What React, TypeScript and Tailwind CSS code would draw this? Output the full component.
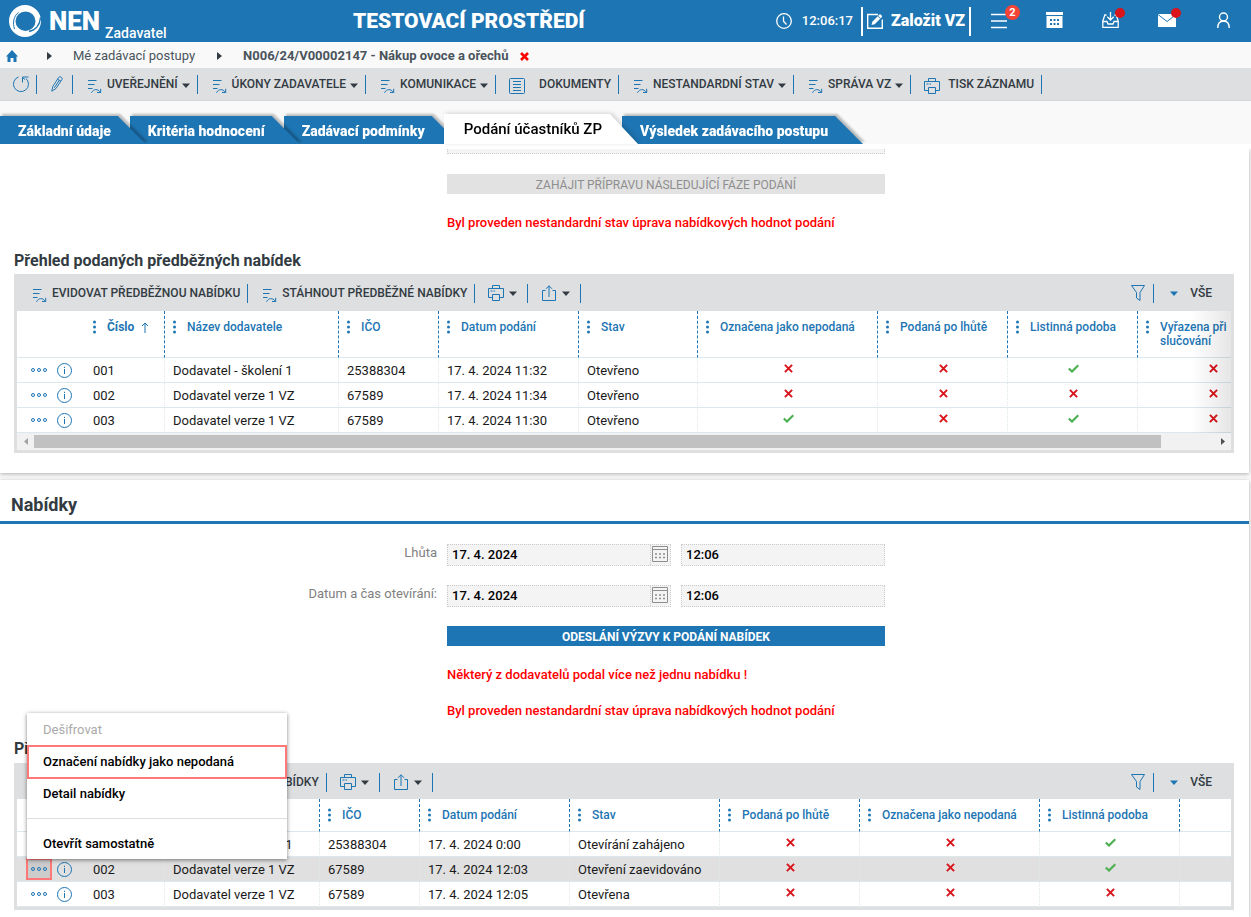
import { ReactNode } from 'react';
import clsx from 'clsx';

type Cell = string | boolean;

interface Column {
  label: string;
  width: string;
  sorted?: boolean;
  mark?: boolean;
}

interface Row {
  cells: Cell[];
  active?: boolean;
}

const tabs = [
  { label: 'Základní údaje', layer: 'z-40' },
  { label: 'Kritéria hodnocení', layer: 'z-30' },
  { label: 'Zadávací podmínky', layer: 'z-20' },
  { label: 'Podání účastníků ZP', layer: 'z-50', active: true },
  { label: 'Výsledek zadávacího postupu', layer: 'z-10' },
];

const preliminaryColumns: Column[] = [
  { label: 'Číslo', width: 'w-[80px]', sorted: true },
  { label: 'Název dodavatele', width: 'w-[174px]' },
  { label: 'IČO', width: 'w-[100px]' },
  { label: 'Datum podání', width: 'w-[140px]' },
  { label: 'Stav', width: 'w-[119px]' },
  { label: 'Označena jako nepodaná', width: 'w-[180px]', mark: true },
  { label: 'Podaná po lhůtě', width: 'w-[130px]', mark: true },
  { label: 'Listinná podoba', width: 'w-[130px]', mark: true },
  { label: 'Vyřazena při slučování', width: 'w-[150px]', mark: true },
];

const preliminaryRows: Row[] = [
  { cells: ['001', 'Dodavatel - školení 1', '25388304', '17. 4. 2024 11:32', 'Otevřeno', false, false, true, false] },
  { cells: ['002', 'Dodavatel verze 1 VZ', '67589', '17. 4. 2024 11:34', 'Otevřeno', false, false, false, false] },
  { cells: ['003', 'Dodavatel verze 1 VZ', '67589', '17. 4. 2024 11:30', 'Otevřeno', true, false, true, false] },
];

const offerColumns: Column[] = [
  { label: 'Číslo', width: 'w-[80px]', sorted: true },
  { label: 'Název dodavatele', width: 'w-[155px]' },
  { label: 'IČO', width: 'w-[100px]' },
  { label: 'Datum podání', width: 'w-[150px]' },
  { label: 'Stav', width: 'w-[150px]' },
  { label: 'Podaná po lhůtě', width: 'w-[140px]', mark: true },
  { label: 'Označena jako nepodaná', width: 'w-[180px]', mark: true },
  { label: 'Listinná podoba', width: 'w-[140px]', mark: true },
];

const offerRows: Row[] = [
  { cells: ['001', 'Dodavatel - školení 1', '25388304', '17. 4. 2024 0:00', 'Otevírání zahájeno', false, false, true] },
  { cells: ['002', 'Dodavatel verze 1 VZ', '67589', '17. 4. 2024 12:03', 'Otevření zaevidováno', false, false, true], active: true },
  { cells: ['003', 'Dodavatel verze 1 VZ', '67589', '17. 4. 2024 12:05', 'Otevřena', false, false, false] },
];

const Logo = () => (
  <svg className="h-8 w-8" viewBox="0 0 32 32" fill="none">
    <path
      fill="#fff"
      fillRule="evenodd"
      d="M16 0a16 16 0 1 0 0 32a16 16 0 0 0 0-32zM16.500 6.500a10 9.700 0 1 1 0 19.400a10 9.700 0 0 1 0-19.400z"
    />
    <path d="M5.500 24C3.500 18 4.500 11 9.500 7.500" stroke="#1d75b3" strokeWidth="1" />
    <path d="M31.500 12.500C31 20 26.500 25.500 20 26.500" stroke="#1d75b3" strokeWidth="1.300" />
  </svg>
);

const ClockIcon = () => (
  <svg className="h-4 w-4" viewBox="0 0 16 16" fill="none" stroke="#fff" strokeWidth="1.300">
    <circle cx="8" cy="8" r="7.300" />
    <path d="M7.500 3.500V8.200L10.500 11.500" />
  </svg>
);

const EditIcon = () => (
  <svg className="h-4 w-4" viewBox="0 0 16 16" fill="none">
    <path d="M11 1.500H.7V15.300H15.300V6.500" stroke="#fff" strokeWidth="1.400" />
    <path d="M4.500 12L5.300 8.800L12.500 1.500C13.200.800 15.700 3.200 14.900 4L7.700 11.200z" fill="#fff" />
    <path d="M11 3.200L13.400 5.600" stroke="#1d75b3" strokeWidth="1" />
  </svg>
);

const BurgerIcon = () => (
  <svg className="h-4 w-4" viewBox="0 0 16 16" stroke="#fff" strokeWidth="1.700">
    <path d="M0 1.500H16M0 8H16M0 14.500H16" />
  </svg>
);

const CalendarSolidIcon = () => (
  <svg className="h-4 w-[17px]" viewBox="0 0 17 16">
    <path fill="#fff" d="M0 0H17V3H0zM.500 4H16.500V16H.500z" />
    <path fill="#1d75b3" d="M4 7h2v2H4zM7.500 7h2v2h-2zM11 7h2v2h-2zM4 11h2v2H4zM7.500 11h2v2h-2zM11 11h2v2h-2z" />
  </svg>
);

const InboxIcon = () => (
  <svg className="h-4 w-[17px]" viewBox="0 0 17 16" fill="none" stroke="#fff" strokeWidth="1.300">
    <path d="M8.500 0V7.500M5.300 4.800L8.500 8L11.700 4.800" />
    <path d="M4.500 3H2.800L.8 9V15.300H16.200V9L14.200 3H12.500" />
    <path d="M.8 9.500H5L6 12H11L12 9.500H16.200" />
  </svg>
);

const MailIcon = () => (
  <svg className="h-[14px] w-[18px]" viewBox="0 0 18 14">
    <path fill="#fff" d="M0 1H18V14H0z" />
    <path d="M0 1.500L9 8.500L18 1.500" fill="none" stroke="#1d75b3" strokeWidth="1" />
  </svg>
);

const UserIcon = () => (
  <svg className="h-4 w-[13px]" viewBox="0 0 13 16" fill="none" stroke="#fff" strokeWidth="1.400">
    <circle cx="6.500" cy="5" r="4" />
    <path d="M.8 16C.8 11.500 3 9 6.500 9S12.200 11.500 12.200 16" />
  </svg>
);

const RefreshIcon = () => (
  <svg className="h-[18px] w-[18px]" viewBox="0 0 18 18" fill="none" stroke="#1d75b3" strokeWidth="1">
    <path d="M6.500 2A7.500 7.500 0 1 0 14 3.500" />
    <path d="M10.500 7.500V2H16.500M10.500 2.500L13 4.500" />
  </svg>
);

const PencilIcon = () => (
  <svg className="h-4 w-3" viewBox="0 0 12 16" fill="none" stroke="#1d75b3" strokeWidth="1">
    <path d="M.8 15.200L1.800 10.500L7.600 1.500C8.700-.200 12 1.700 10.900 3.500L5 12.500z" />
    <path d="M6.500 3.200L10 5.300M8.300 4.300L3.300 11.800" />
  </svg>
);

const ActionIcon = () => (
  <svg className="h-4 w-[14px]" viewBox="0 0 14 16" fill="none" stroke="#1d75b3" strokeWidth="1">
    <path d="M0 2.500H8.500M0 6.500H6.500M0 10.500H4.500" strokeWidth="1.200" />
    <path d="M3.500 14.800C5.500 10.800 9.500 10.500 12.500 14.300M12.700 10.800V14.500H9" />
  </svg>
);

const DocumentIcon = () => (
  <svg className="h-4 w-4" viewBox="0 0 16 16" fill="none" stroke="#1d75b3" strokeWidth="1">
    <rect x=".5" y=".5" width="15" height="15" rx="1" />
    <path d="M4 3.500H12M4 6.500H12M4 9.500H12M4 12.500H12" />
  </svg>
);

const PrinterIcon = () => (
  <svg className="h-4 w-4" viewBox="0 0 16 16" fill="none" stroke="#1d75b3" strokeWidth="1">
    <path d="M4.500 3.500V.500H11.500V3.500M4.500 12.500H.500V3.500H15.500V12.500H11.500" />
    <path d="M4.500 9.500H11.500V15.500H4.500zM2.500 6H4.500M5.500 6H7" />
  </svg>
);

const ShareIcon = () => (
  <svg className="h-4 w-[14px]" viewBox="0 0 14 16" fill="none" stroke="#1d75b3" strokeWidth="1">
    <path d="M3.500 5.500H.500V15.500H13.500V5.500H10.500M7 12V.800M4 3.800L7 .800L10 3.800" />
  </svg>
);

const FilterIcon = () => (
  <svg className="h-4 w-[14px]" viewBox="0 0 14 16" fill="none" stroke="#1d75b3" strokeWidth="1">
    <path d="M.500.500H13.500L9 7.500V15.500L5.500 13V7.500z" />
  </svg>
);

const CalendarIcon = () => (
  <svg className="h-4 w-4" viewBox="0 0 16 16" fill="none" stroke="#8e8e8e" strokeWidth="1">
    <path d="M.500.500H15.500V15.500H.500zM.500 3.500H15.500" />
    <path d="M3 8H13M3 11.500H13" strokeWidth="1.500" strokeDasharray="2 2" />
  </svg>
);

const Caret = ({ className }: { className?: string }) => (
  <svg className={clsx('h-[5px] w-2', className)} viewBox="0 0 8 5" fill="currentColor">
    <path d="M0 .500H8L4 5z" />
  </svg>
);

const CrumbArrow = () => (
  <svg className="h-2 w-[5px]" viewBox="0 0 5 8" fill="#333b42">
    <path d="M0 0L5 4L0 8z" />
  </svg>
);

const MoreIcon = () => (
  <svg className="h-1 w-4" viewBox="0 0 16 4" fill="none" stroke="#1d75b3" strokeWidth="1">
    <circle cx="2" cy="2" r="1.500" />
    <circle cx="8" cy="2" r="1.500" />
    <circle cx="14" cy="2" r="1.500" />
  </svg>
);

const InfoIcon = () => (
  <svg className="h-[15px] w-[15px]" viewBox="0 0 15 15" fill="none" stroke="#1d75b3" strokeWidth="1">
    <circle cx="7.500" cy="7.500" r="7" />
    <path d="M7.500 6V11M7.500 3.800V5" />
  </svg>
);

const Mark = ({ checked }: { checked: boolean }) =>
  checked ? (
    <svg className="mx-auto mb-1.5 h-[9px] w-[11px]" viewBox="0 0 11 9" role="img" aria-label="Ano">
      <path d="M.8 4.500L4 7.500L10.300 1.200" fill="none" stroke="#4caf50" strokeWidth="2.200" />
    </svg>
  ) : (
    <svg className="mx-auto mb-1.5 h-[9px] w-[9px]" viewBox="0 0 9 9" role="img" aria-label="Ne">
      <path d="M.9.9L8.100 8.100M8.100.9L.9 8.100" stroke="#d9151b" strokeWidth="2" />
    </svg>
  );

const Header = () => (
  <header className="flex h-[42px] items-center bg-[#1d75b3] text-white">
    <div className="flex w-[353px] items-center pl-[9px]">
      <Logo />
      <span className="ml-2 text-[26px] leading-8 font-black">NEN</span>
      <span className="mt-6 ml-[5px] text-sm leading-4 font-medium">Zadavatel</span>
    </div>
    <h1 className="text-[21px] leading-6 font-black">TESTOVACÍ PROSTŘEDÍ</h1>
    <div className="ml-auto flex items-center">
      <ClockIcon />
      <span className="mr-2 ml-2.5 text-[13px] leading-4 font-medium">12:06:17</span>
      <button type="button" className="flex h-[29px] items-center gap-2 border-x-2 border-white px-1 text-base font-black">
        <EditIcon />
        Založit VZ
      </button>
      <button type="button" aria-label="Úkoly" className="relative flex h-[42px] w-14 items-center justify-center">
        <BurgerIcon />
        <span className="absolute top-[5px] left-[34px] h-[15px] w-[15px] rounded-full bg-[#f44336] text-center text-[11px] leading-[15px] font-bold">
          2
        </span>
      </button>
      <button type="button" aria-label="Kalendář" className="flex h-[42px] w-14 items-center justify-center pr-0.5 pb-0.5">
        <CalendarSolidIcon />
      </button>
      <button type="button" aria-label="Doručené" className="relative flex h-[42px] w-14 items-center justify-center pr-0.5 pb-0.5">
        <InboxIcon />
        <span className="absolute top-2 left-8 h-2.5 w-2.5 rounded-full bg-[#d9151b]" />
      </button>
      <button type="button" aria-label="Zprávy" className="relative flex h-[42px] w-14 items-center justify-center pb-0.5">
        <MailIcon />
        <span className="absolute top-2 left-8 h-2.5 w-2.5 rounded-full bg-[#d9151b]" />
      </button>
      <button type="button" aria-label="Uživatel" className="flex h-[42px] w-14 items-center justify-center pb-0.5">
        <UserIcon />
      </button>
    </div>
  </header>
);

const Breadcrumbs = () => (
  <nav className="flex h-[26px] items-center pt-0.5 text-[13px] text-[#4a545c]">
    <a href="#domu" aria-label="Domů" className="pl-1.5">
      <svg className="h-3 w-3" viewBox="0 0 12 12" fill="#1d75b3">
        <path d="M6 0L12 6.500H10.500V12H7.500V8H4.500V12H1.500V6.500H0z" />
      </svg>
    </a>
    <span className="ml-[29px]">
      <CrumbArrow />
    </span>
    <a href="#postupy" className="ml-[21px]">
      Mé zadávací postupy
    </a>
    <span className="ml-[22px]">
      <CrumbArrow />
    </span>
    <span className="ml-[21px] font-bold">N006/24/V00002147 - Nákup ovoce a ořechů</span>
    <button type="button" aria-label="Zavřít" className="ml-3">
      <svg className="h-[9px] w-[9px]" viewBox="0 0 9 9" stroke="#f00" strokeWidth="2.600">
        <path d="M1 1L8 8M8 1L1 8" />
      </svg>
    </button>
  </nav>
);

interface ToolButtonProps {
  icon: ReactNode;
  label: string;
  gap?: string;
  padding?: string;
  caret?: boolean;
}

const ToolButton = ({ icon, label, gap = 'ml-[5px]', padding = 'pl-[15px]', caret }: ToolButtonProps) => (
  <button
    type="button"
    className={clsx(
      'flex h-[19px] items-center border-r border-[#1d75b3] pr-[7px] text-xs font-medium text-[#333b42]',
      padding
    )}
  >
    <span className="mt-1">{icon}</span>
    <span className={gap}>{label}</span>
    {caret && <Caret className="mt-0.5 ml-1" />}
  </button>
);

const Toolbar = () => (
  <div className="flex h-[33px] items-center border-b border-[#d3d5d7] bg-[#dddfe1]">
    <button
      type="button"
      aria-label="Obnovit"
      className="flex h-[19px] items-center border-r border-[#1d75b3] pr-1.5 pl-3"
    >
      <RefreshIcon />
    </button>
    <button type="button" aria-label="Upravit" className="flex h-[19px] items-center border-r border-[#1d75b3] pr-[9px] pl-3.5">
      <PencilIcon />
    </button>
    <ToolButton icon={<ActionIcon />} label="UVEŘEJNĚNÍ" caret />
    <ToolButton icon={<ActionIcon />} label="ÚKONY ZADAVATELE" caret />
    <ToolButton icon={<ActionIcon />} label="KOMUNIKACE" caret />
    <ToolButton icon={<DocumentIcon />} label="DOKUMENTY" gap="ml-3.5" padding="pl-[13px]" />
    <ToolButton icon={<ActionIcon />} label="NESTANDARDNÍ STAV" caret />
    <ToolButton icon={<ActionIcon />} label="SPRÁVA VZ" caret />
    <ToolButton icon={<PrinterIcon />} label="TISK ZÁZNAMU" gap="ml-2" padding="pl-[13px]" />
  </div>
);

const Tabs = () => (
  <ul className="flex pt-[13px]">
    {tabs.map(({ label, layer, active }) => (
      <li
        key={label}
        className={clsx(
          'relative -mr-4',
          layer,
          active
            ? 'drop-shadow-[2px_-1px_2px_rgba(0,0,0,0.15)]'
            : 'pt-0.5 drop-shadow-[2px_-2px_1px_rgba(0,0,0,0.25)]'
        )}
      >
        <button
          type="button"
          className={clsx(
            'block [clip-path:polygon(0_0,calc(100%-28px)_0,100%_100%,0_100%)]',
            active
              ? 'h-[30px] bg-white pr-[36px] pl-5 text-[15px] font-medium text-black'
              : 'h-7 bg-[#1d75b3] pt-0.5 pr-[35px] pl-[18px] text-sm font-black text-white'
          )}
        >
          {label}
        </button>
      </li>
    ))}
  </ul>
);

const RowMenu = () => (
  <div
    role="menu"
    className="absolute bottom-[21px] left-px z-10 w-[260px] bg-white text-[13px] font-medium text-black shadow-[0_1px_4px_rgba(0,0,0,0.5)]"
  >
    <button type="button" role="menuitem" disabled className="block h-8 w-full px-4 pt-0.5 text-left font-normal text-[#aaa]">
      Dešifrovat
    </button>
    <button type="button" role="menuitem" className="block h-[34px] w-full px-4 text-left ring-2 ring-[#ff7878] ring-inset">
      Označení nabídky jako nepodaná
    </button>
    <button type="button" role="menuitem" className="block h-7 w-full px-4 pt-0.5 text-left">
      Detail nabídky
    </button>
    <hr className="mt-[11px] mb-2 border-[#ddd]" />
    <button type="button" role="menuitem" className="block h-8 w-full px-4 pt-0.5 text-left">
      Otevřít samostatně
    </button>
  </div>
);

interface GridToolbarProps {
  actions: string[];
}

const GridToolbar = ({ actions }: GridToolbarProps) => (
  <div className="flex h-9 items-center bg-[#dddfe1] pt-0.5 pl-1">
    {actions.map((action) => (
      <ToolButton key={action} icon={<ActionIcon />} label={action} />
    ))}
    <button type="button" aria-label="Tisk" className="flex h-[19px] items-center border-r border-[#1d75b3] pr-2.5 pl-[13px] text-[#333b42]">
      <PrinterIcon />
      <Caret className="ml-[5px]" />
    </button>
    <button type="button" aria-label="Export" className="flex h-[19px] items-center border-r border-[#1d75b3] pr-2.5 pl-[13px] text-[#333b42]">
      <span className="px-px">
        <ShareIcon />
      </span>
      <Caret className="ml-[5px]" />
    </button>
    <button type="button" aria-label="Filtr" className="ml-auto flex h-[19px] items-center border-r border-[#1d75b3] pr-2">
      <FilterIcon />
    </button>
    <button type="button" className="flex items-center gap-3 pr-[22px] pl-4 text-xs font-medium text-[#333b42]">
      <Caret className="text-[#1d75b3]" />
      VŠE
    </button>
  </div>
);

interface DataTableProps {
  columns: Column[];
  rows: Row[];
  tall?: boolean;
  filler?: boolean;
}

const DataTable = ({ columns, rows, tall, filler }: DataTableProps) => (
  <table className={clsx('table-fixed border-separate border-spacing-0 bg-white', tall ? 'w-[1271px]' : 'w-full')}>
    <colgroup>
      <col className="w-[68px]" />
      {columns.map(({ label, width }) => (
        <col key={label} className={width} />
      ))}
      {filler && <col />}
    </colgroup>
    <thead>
      <tr>
        <th className="border-b border-[#dde7ec]" aria-label="Akce" />
        {columns.map(({ label, sorted }) => (
          <th
            key={label}
            className={clsx(
              'border-r border-b border-r-[#1d75b3] border-b-[#dde7ec] pt-[9px] pl-2 text-left align-top text-xs leading-[14px] text-[#1d75b3] [border-right-style:dashed]',
              tall ? 'h-[47px]' : 'h-[33px]',
              sorted ? 'font-bold' : 'pr-4 font-medium'
            )}
          >
            <div className="flex gap-[11px]">
              <svg className="h-[14px] w-[3px] shrink-0" viewBox="0 0 3 14" fill="#1d75b3">
                <circle cx="1.500" cy="2" r="1.500" />
                <circle cx="1.500" cy="7" r="1.500" />
                <circle cx="1.500" cy="12" r="1.500" />
              </svg>
              <span>{label}</span>
              {sorted && (
                <svg className="-ml-1 h-[14px] w-2 shrink-0" viewBox="0 0 8 14" fill="none" stroke="#1d75b3">
                  <path d="M4 13V3M1 6L4 3L7 6" />
                </svg>
              )}
            </div>
          </th>
        ))}
        {filler && <th className="border-b border-[#dde7ec]" aria-label="Prázdný sloupec" />}
      </tr>
    </thead>
    <tbody>
      {rows.map(({ cells, active }) => (
        <tr key={cells[0] as string} className={clsx('text-[13px] leading-4 text-[#1a1a1a]', active && 'bg-[#e0e0e0]')}>
          <td className="h-[25px] border-b border-[#dde7ec] p-0">
            <div className="flex items-center pl-[9px]">
              <div className="relative">
                <button
                  type="button"
                  aria-label="Akce řádku"
                  className={clsx(
                    'flex h-[22px] w-[26px] items-center justify-center',
                    active && 'bg-[#ccc] ring-2 ring-[#ff7878] ring-inset'
                  )}
                >
                  <MoreIcon />
                </button>
                {active && <RowMenu />}
              </div>
              <button type="button" aria-label="Detail" className="ml-[5px]">
                <InfoIcon />
              </button>
            </div>
          </td>
          {cells.map((cell, index) => (
            <td
              key={columns[index].label}
              className={clsx(
                'border-r border-b border-[#dde7ec] pt-0.5 pb-0 whitespace-nowrap [border-right-style:dotted]',
                columns[index].mark ? 'pr-0 pl-0.5' : 'pl-2'
              )}
            >
              {typeof cell === 'boolean' ? <Mark checked={cell} /> : cell}
            </td>
          ))}
          {filler && <td className="border-b border-[#dde7ec]" />}
        </tr>
      ))}
    </tbody>
  </table>
);

const ScrollBar = () => (
  <div className="flex h-[17px] items-center bg-[#f1f1f1]">
    <div className="flex w-[17px] justify-center">
      <svg className="h-[7px] w-1" viewBox="0 0 4 7" fill="#a3a3a3">
        <path d="M4 0L0 3.500L4 7z" />
      </svg>
    </div>
    <div className="flex-1">
      <div className="h-[13px] w-[95.5%] bg-[#c1c1c1]" />
    </div>
    <div className="flex w-[17px] justify-center">
      <svg className="h-[7px] w-1" viewBox="0 0 4 7" fill="#505050">
        <path d="M0 0L4 3.500L0 7z" />
      </svg>
    </div>
  </div>
);

interface DateFieldProps {
  id: string;
  label: string;
}

const DateField = ({ id, label }: DateFieldProps) => (
  <div className="grid h-[21px] grid-cols-[437px_438px] gap-x-2.5">
    <label htmlFor={id} className="text-right text-[13px] leading-[18px] text-[#808080]">
      {label}
    </label>
    <div className="flex gap-2.5 text-[13px] font-medium text-black">
      <div className="flex w-[224px] border border-dotted border-[#ccc] bg-[#f4f4f4]">
        <input id={id} defaultValue="17. 4. 2024" className="min-w-0 flex-1 pl-1" />
        <button
          type="button"
          aria-label="Vybrat datum"
          className="flex w-5 items-center border-l border-dotted border-[#ccc] pb-0.5 pl-px"
        >
          <CalendarIcon />
        </button>
      </div>
      <input
        aria-label={`${label} čas`}
        defaultValue="12:06"
        className="min-w-0 flex-1 border border-dotted border-[#ccc] bg-[#f4f4f4] pl-1"
      />
    </div>
  </div>
);

const PreliminaryOffers = () => (
  <section className="mr-0.5 bg-white pb-5 shadow-[0_1px_4px_rgba(0,0,0,0.3)]">
    <div className="ml-[447px] flex h-[5px] w-[438px] items-end overflow-hidden">
      <select
        aria-label="Následující fáze"
        className="h-[21px] w-full shrink-0 appearance-none border border-dotted border-[#ccc] bg-[#f4f4f4]"
      />
    </div>
    <button type="button" disabled className="mt-5 ml-[447px] block h-5 w-[438px] bg-[#e2e2e2] pt-0.5 text-xs text-[#8e8e8e]">
      ZAHÁJIT PŘÍPRAVU NÁSLEDUJÍCÍ FÁZE PODÁNÍ
    </button>
    <p className="mt-[19px] ml-[447px] text-[13px] leading-5 font-medium text-[#f00]">
      Byl proveden nestandardní stav úprava nabídkových hodnot podání
    </p>
    <div className="mr-[15px] ml-3.5">
      <h2 className="pt-4 pb-px text-base leading-6 font-bold text-[#333b42]">Přehled podaných předběžných nabídek</h2>
      <GridToolbar actions={['EVIDOVAT PŘEDBĚŽNOU NABÍDKU', 'STÁHNOUT PŘEDBĚŽNÉ NABÍDKY']} />
      <div className="border-x-[3px] border-t border-b-[3px] border-[#dddfe1]">
        <div className="relative overflow-hidden">
          <DataTable columns={preliminaryColumns} rows={preliminaryRows} tall />
          <div className="absolute inset-y-0 right-0 w-10 bg-linear-to-r from-black/0 to-black/10" />
        </div>
        <ScrollBar />
      </div>
    </div>
  </section>
);

const Offers = () => (
  <section className="mt-[7px] mr-0.5 flex-1 bg-white pb-[7px] shadow-[0_1px_4px_rgba(0,0,0,0.3)]">
    <h2 className="border-b-[3px] border-[#1d75b3] pt-[13px] pb-1 pl-[11px] text-lg leading-6 font-bold text-[#333b42]">
      Nabídky
    </h2>
    <div className="mt-5 flex flex-col gap-5">
      <DateField id="lhuta" label="Lhůta" />
      <DateField id="otevirani" label="Datum a čas otevírání:" />
    </div>
    <button type="button" className="mt-5 ml-[447px] block h-5 w-[438px] bg-[#1d75b3] pt-0.5 text-xs font-bold text-white">
      ODESLÁNÍ VÝZVY K PODÁNÍ NABÍDEK
    </button>
    <div className="mt-[19px] ml-[447px] flex flex-col gap-4 text-[13px] leading-5 font-medium text-[#f00]">
      <p>Některý z dodavatelů podal více než jednu nabídku !</p>
      <p>Byl proveden nestandardní stav úprava nabídkových hodnot podání</p>
    </div>
    <div className="mr-[15px] ml-3.5">
      <h2 className="pt-4 pb-0.5 text-base leading-6 font-bold text-[#333b42]">Přehled podaných nabídek</h2>
      <GridToolbar actions={['EVIDOVAT NABÍDKU', 'STÁHNOUT NABÍDKY']} />
      <div className="border-x-[3px] border-b-[3px] border-[#dddfe1]">
        <DataTable columns={offerColumns} rows={offerRows} filler />
      </div>
    </div>
  </section>
);

export default function App() {
  return (
    <div className="flex min-h-screen flex-col bg-[#f9f9f9] font-['Roboto',sans-serif]">
      <Header />
      <Breadcrumbs />
      <Toolbar />
      <Tabs />
      <main className="flex flex-1 flex-col overflow-hidden border-t-[5px] border-white">
        <PreliminaryOffers />
        <Offers />
      </main>
    </div>
  );
}
